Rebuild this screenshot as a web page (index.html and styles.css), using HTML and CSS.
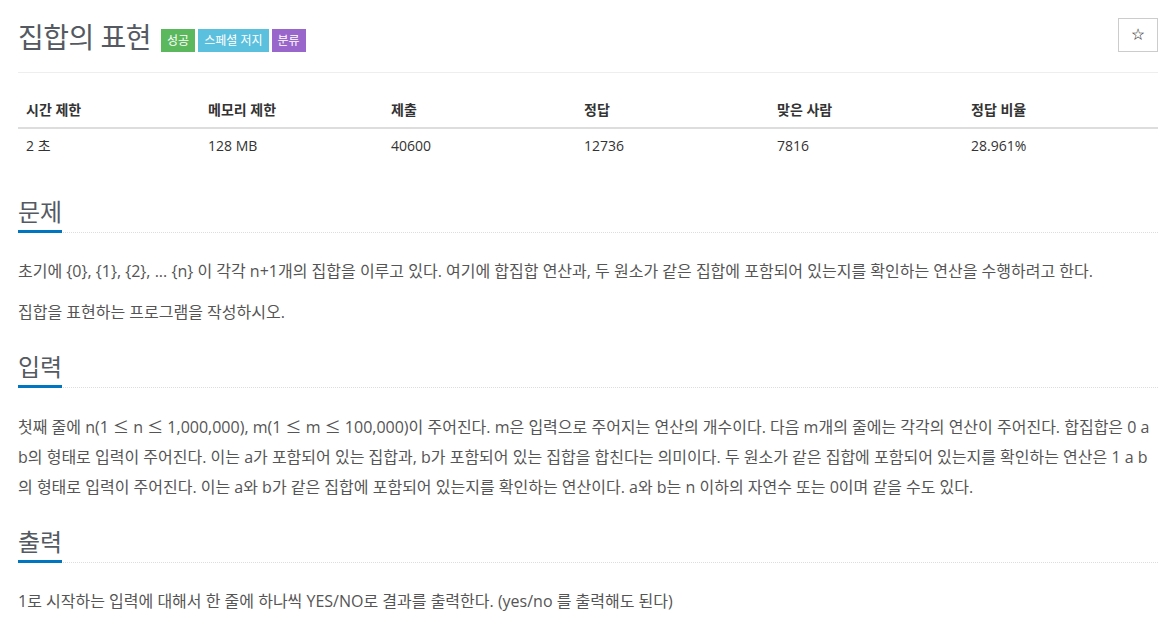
FILE: index.html
```html
<!DOCTYPE html>
<html lang="ko">
<head>
  <meta charset="UTF-8" />
  <meta name="viewport" content="width=device-width, initial-scale=1.0"/>
  <title>집합의 표현</title>
  <link rel="stylesheet" href="styles.css">
</head>
<body>

  <div class="container">
    <div class="page-header">
      <h1>
        <span class="title">집합의 표현</span><span class="label label-success">성공</span><span class="label label-info">스페셜 저지</span><span class="label label-purple">분류</span>
      </h1>
      <button class="star-btn">☆</button>
    </div>

    <table class="info-table">
      <colgroup>
        <col style="width: 182px">
        <col style="width: 183px">
        <col style="width: 193px">
        <col style="width: 193px">
        <col style="width: 194px">
        <col>
      </colgroup>
      <thead>
        <tr>
          <th>시간 제한</th>
          <th>메모리 제한</th>
          <th>제출</th>
          <th>정답</th>
          <th>맞은 사람</th>
          <th>정답 비율</th>
        </tr>
      </thead>
      <tbody>
        <tr>
          <td>2 초</td>
          <td>128 MB</td>
          <td>40600</td>
          <td>12736</td>
          <td>7816</td>
          <td>28.961%</td>
        </tr>
      </tbody>
    </table>

    <section class="problem-section">
      <div class="headline"><h2>문제</h2></div>
      <div class="problem-text">
        <p>초기에 {0}, {1}, {2}, ... {n} 이 각각 n+1개의 집합을 이루고 있다. 여기에 합집합 연산과, 두 원소가 같은 집합에 포함되어 있는지를 확인하는 연산을 수행하려고 한다.</p>
        <p>집합을 표현하는 프로그램을 작성하시오.</p>
      </div>
    </section>

    <section class="problem-section">
      <div class="headline"><h2>입력</h2></div>
      <div class="problem-text">
        <p>첫째 줄에 n(1 <span class="math">≤</span> n <span class="math">≤</span> 1,000,000), m(1 <span class="math">≤</span> m <span class="math">≤</span> 100,000)이 주어진다. m은 입력으로 주어지는 연산의 개수이다. 다음 m개의 줄에는 각각의 연산이 주어진다. 합집합은 0 a b의 형태로 입력이 주어진다. 이는 a가 포함되어 있는 집합과, b가 포함되어 있는 집합을 합친다는 의미이다. 두 원소가 같은 집합에 포함되어 있는지를 확인하는 연산은 1 a b의 형태로 입력이 주어진다. 이는 a와 b가 같은 집합에 포함되어 있는지를 확인하는 연산이다. a와 b는 n 이하의 자연수 또는 0이며 같을 수도 있다.</p>
      </div>
    </section>

    <section class="problem-section">
      <div class="headline"><h2>출력</h2></div>
      <div class="problem-text">
        <p>1로 시작하는 입력에 대해서 한 줄에 하나씩 YES/NO로 결과를 출력한다. (yes/no 를 출력해도 된다)</p>
      </div>
    </section>
  </div>

</body>
</html>
```

FILE: styles.css
```css
body {
  margin: 0;
  padding: 0;
  background: #fff;
  font-family: 'Open Sans', 'Noto Sans CJK KR', sans-serif;
  color: #333;
}

.container {
  padding: 18px 16px 0 18px;
}

.page-header {
  display: flex;
  justify-content: space-between;
  align-items: flex-start;
  padding-bottom: 17px;
  border-bottom: 1px solid #eee;
}

.page-header h1 {
  margin: 0;
  font-weight: normal;
  line-height: 36px;
}

.title {
  font-size: 28px;
  letter-spacing: -0.5px;
  color: #555a62;
  margin-right: 10px;
}

.label {
  display: inline-block;
  position: relative;
  top: 1px;
  font-size: 12px;
  line-height: 15px;
  padding: 4px 6px;
  margin-right: 3px;
  color: #fff;
  vertical-align: middle;
}

.label-success {
  background-color: #5cb85c;
}

.label-info {
  background-color: #5bc0de;
}

.label-purple {
  background-color: #9966cc;
}

.star-btn {
  width: 40px;
  height: 34px;
  border: 1px solid #ccc;
  background: #fff;
  font-size: 14px;
  color: #333;
  padding: 0;
  cursor: pointer;
}

.info-table {
  width: 100%;
  margin-top: 20px;
  margin-bottom: 32px;
  border-collapse: collapse;
  font-size: 14px;
}

.info-table th,
.info-table td {
  text-align: left;
  padding: 8px;
  line-height: 18px;
}

.info-table th {
  font-weight: bold;
  border-bottom: 2px solid #ddd;
}

.problem-section {
  margin-top: 23px;
}

.headline {
  border-bottom: 1px dotted #ddd;
}

.headline h2 {
  display: inline-block;
  margin: 0 0 -1px;
  padding-bottom: 1px;
  font-size: 24px;
  font-weight: normal;
  line-height: 34px;
  color: #555a62;
  border-bottom: 3px solid #0076c0;
}

.problem-text {
  font-size: 16px;
  color: #555;
  line-height: 30px;
  padding-top: 23px;
}

.problem-text p {
  margin: 0 0 11px;
}

.math {
  font-family: 'Noto Sans CJK KR', sans-serif;
}
```
